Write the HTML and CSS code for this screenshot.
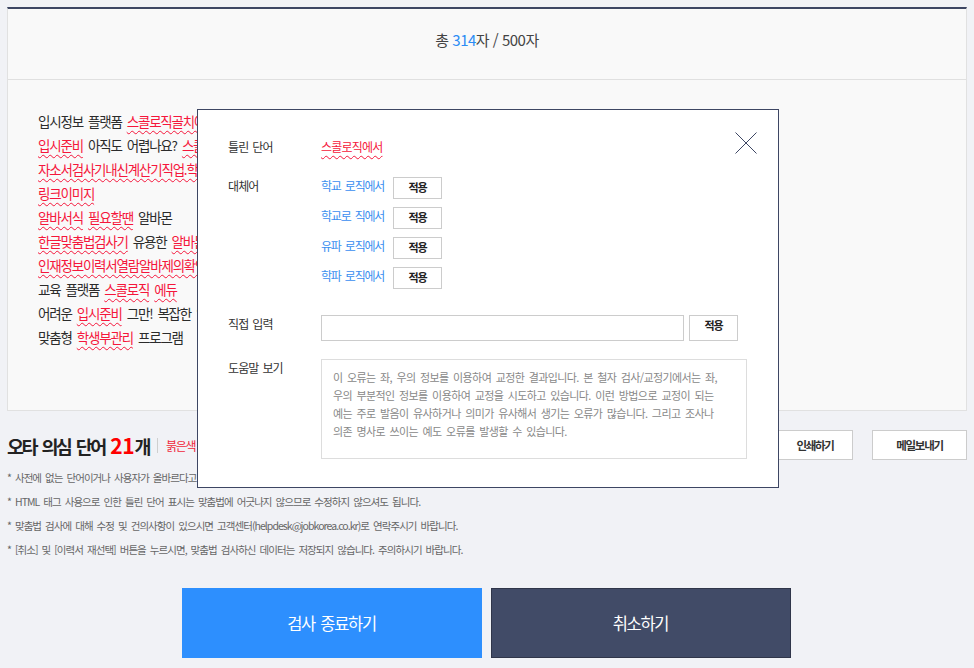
FILE: index.html
```html
<!DOCTYPE html>
<html lang="ko">
<head>
<meta charset="utf-8">
<title>맞춤법 검사</title>
<link rel="stylesheet" href="styles.css">
</head>
<body>
<div class="page">
  <section class="editor">
    <header class="count">총&nbsp;<span class="num">314</span>자 / 500자</header>
    <div class="text">
      <p>입시정보 플랫폼 <span class="err">스콜로직골치아픈</span> <span class="err">입시정보</span> 한번에</p>
      <p><span class="err">입시준비</span> 아직도 어렵나요? <span class="err">스콜로직에서</span> 해결하세요</p>
      <p><span class="err">자소서검사기내신계산기직업.학과정보</span></p>
      <p><span class="err">링크이미지</span></p>
      <p><span class="err">알바서식</span> <span class="err">필요할땐</span> 알바몬</p>
      <p><span class="err">한글맞춤법검사기</span> 유용한 <span class="err">알바몬</span> 서비스</p>
      <p><span class="err">인재정보이력서열람알바제의확인</span></p>
      <p>교육 플랫폼 <span class="err">스콜로직</span> <span class="err">에듀</span></p>
      <p>어려운 <span class="err">입시준비</span> 그만! 복잡한 입시정보 정리</p>
      <p>맞춤형 <span class="err">학생부관리</span> 프로그램</p>
    </div>
  </section>

  <div class="summary">
    <h2 class="title">오타 의심 단어 <em>21</em>개</h2>
    <span class="sep"></span>
    <span class="hint">붉은색 밑줄이 그어진 단어를 클릭하시면 대체어를 확인할 수 있습니다.</span>
    <div class="actions">
      <button class="btn-sm print">인쇄하기</button>
      <button class="btn-sm mail">메일보내기</button>
    </div>
  </div>

  <ul class="notes">
    <li>* 사전에 없는 단어이거나 사용자가 올바르다고 판단한 경우에는 수정하지 않으셔도 됩니다.</li>
    <li>* HTML 태그 사용으로 인한 틀린 단어 표시는 맞춤법에 어긋나지 않으므로 수정하지 않으셔도 됩니다.</li>
    <li>* 맞춤법 검사에 대해 수정 및 건의사항이 있으시면 고객센터(helpdesk@jobkorea.co.kr)로 연락주시기 바랍니다.</li>
    <li>* [취소] 및 [이력서 재선택] 버튼을 누르시면, 맞춤법 검사하신 데이터는 저장되지 않습니다. 주의하시기 바랍니다.</li>
  </ul>

  <div class="bottom">
    <button class="big primary">검사 종료하기</button>
    <button class="big secondary">취소하기</button>
  </div>
</div>

<div class="modal">
  <button class="close" aria-label="닫기">
    <svg width="22" height="22" viewBox="0 0 22 22"><path d="M0.5 0.5L21.5 21.5M21.5 0.5L0.5 21.5" stroke="#3d4663" stroke-width="1" fill="none"/></svg>
  </button>
  <div class="row">
    <div class="label">틀린 단어</div>
    <div class="wrong">스콜로직에서</div>
  </div>
  <div class="row alts-row">
    <div class="label">대체어</div>
    <ul class="alts">
      <li><span class="alt">학교 로직에서</span><button class="apply">적용</button></li>
      <li><span class="alt">학교로 직에서</span><button class="apply">적용</button></li>
      <li><span class="alt">유파 로직에서</span><button class="apply">적용</button></li>
      <li><span class="alt">학파 로직에서</span><button class="apply">적용</button></li>
    </ul>
  </div>
  <div class="row input-row">
    <div class="label">직접 입력</div>
    <input class="direct" type="text">
    <button class="apply tall">적용</button>
  </div>
  <div class="row help-row">
    <div class="label">도움말 보기</div>
    <div class="help">이 오류는 좌, 우의 정보를 이용하여 교정한 결과입니다. 본 철자 검사/교정기에서는 좌,<br>우의 부분적인 정보를 이용하여 교정을 시도하고 있습니다. 이런 방법으로 교정이 되는<br>예는 주로 발음이 유사하거나 의미가 유사해서 생기는 오류가 많습니다. 그리고 조사나<br>의존 명사로 쓰이는 예도 오류를 발생할 수 있습니다.</div>
  </div>
</div>
</body>
</html>
```

FILE: styles.css
```css
* { box-sizing: border-box; margin: 0; padding: 0; }

body {
  background: #f1f2f6;
  font-family: "Noto Sans CJK KR", "Noto Sans", sans-serif;
  color: #333;
}

button, input {
  font-family: inherit;
}

.page {
  padding: 7px 7px 0 7px;
}

/* editor box */
.editor {
  background: #f9f9f9;
  border: 1px solid #e1e1e1;
  border-top: 2px solid #3d4663;
}

.count {
  height: 71px;
  padding-bottom: 9px;
  border-bottom: 1px solid #e0e0e0;
  display: flex;
  align-items: center;
  justify-content: center;
  font-size: 15px;
  letter-spacing: -0.5px;
  color: #444;
}

.count .num { color: #2c8cf4; }

.text {
  height: 330px;
  padding: 29px 0 0 30px;
  font-size: 13.5px;
  line-height: 24px;
  letter-spacing: -1.2px;
  word-spacing: 2.5px;
  color: #2b2b2b;
  white-space: nowrap;
}

.err, .wrong {
  color: #f5163b;
  text-decoration: underline wavy #f5163b;
  text-decoration-thickness: 1px;
  text-underline-offset: 3px;
}

/* summary */
.summary {
  display: flex;
  align-items: center;
  height: 30px;
  margin-top: 19px;
}

.title {
  font-size: 18.5px;
  font-weight: bold;
  letter-spacing: -2.6px;
  word-spacing: 3px;
  color: #222;
  line-height: 30px;
}

.title em {
  font-style: normal;
  color: #ff0000;
  font-size: 21px;
  letter-spacing: -0.3px;
}

.sep {
  width: 1px;
  height: 15px;
  background: #cfcfcf;
  margin: 0 8px 0 8px;
}

.hint {
  font-size: 12px;
  letter-spacing: -1.2px;
  word-spacing: 2px;
  color: #f0283c;
  white-space: nowrap;
}

.actions {
  margin-left: auto;
  display: flex;
  gap: 19px;
}

.btn-sm {
  height: 30px;
  background: #fff;
  border: 1px solid #cccccc;
  font-size: 11.5px;
  font-weight: bold;
  letter-spacing: -1.3px;
  color: #333;
}

.btn-sm.print { width: 76px; }
.btn-sm.mail { width: 95px; }

/* notes */
.notes {
  list-style: none;
  margin-top: 6px;
  font-size: 10.5px;
  line-height: 24px;
  letter-spacing: -0.95px;
  word-spacing: 2px;
  color: #666;
  white-space: nowrap;
}

/* bottom buttons */
.bottom {
  display: flex;
  justify-content: center;
  gap: 9px;
  margin-top: 26px;
  padding-right: 2px;
}

.big {
  width: 300px;
  height: 70px;
  color: #fff;
  font-size: 16.5px;
  letter-spacing: -1.3px;
  word-spacing: 2px;
}

.primary {
  background: #2d8ffe;
  border: none;
}

.secondary {
  background: #414b67;
  border: 1px solid #30364a;
}

/* modal */
.modal {
  position: absolute;
  left: 197px;
  top: 109px;
  width: 582px;
  height: 379px;
  background: #fff;
  border: 1px solid #3d4663;
  padding: 28px 0 0 30px;
}

.close {
  position: absolute;
  top: 22px;
  right: 21px;
  width: 22px;
  height: 22px;
  border: none;
  background: none;
  display: block;
}

.close svg { display: block; }

.row {
  display: flex;
  align-items: flex-start;
}

.label {
  width: 93px;
  flex: none;
  font-size: 12px;
  line-height: 18px;
  letter-spacing: -0.9px;
  word-spacing: 1.5px;
  color: #333;
  white-space: nowrap;
}

.wrong {
  font-size: 12px;
  line-height: 18px;
  letter-spacing: -0.8px;
}

.alts-row { margin-top: 21px; }

.alts {
  list-style: none;
  display: flex;
  flex-direction: column;
  gap: 8px;
}

.alts li {
  display: flex;
  align-items: flex-start;
}

.alt {
  width: 72px;
  font-size: 12px;
  line-height: 18px;
  letter-spacing: -1.2px;
  word-spacing: 2px;
  color: #3a8ef0;
  white-space: nowrap;
}

.apply {
  width: 49px;
  height: 22px;
  padding-bottom: 3px;
  background: #fff;
  border: 1px solid #cccccc;
  font-size: 11px;
  font-weight: bold;
  line-height: 16px;
  letter-spacing: -1.2px;
  color: #222;
}

.apply.tall {
  height: 26px;
  padding-bottom: 6px;
  margin-left: 5px;
}

.input-row { margin-top: 26px; }

.direct {
  width: 363px;
  height: 26px;
  border: 1px solid #cccccc;
  background: #fff;
  outline: none;
}

.help-row { margin-top: 18px; }

.help {
  width: 426px;
  height: 100px;
  border: 1px solid #dddddd;
  padding: 8px 11px;
  font-size: 11px;
  line-height: 18px;
  letter-spacing: -0.6px;
  word-spacing: 2px;
  color: #888;
  white-space: nowrap;
}
```
